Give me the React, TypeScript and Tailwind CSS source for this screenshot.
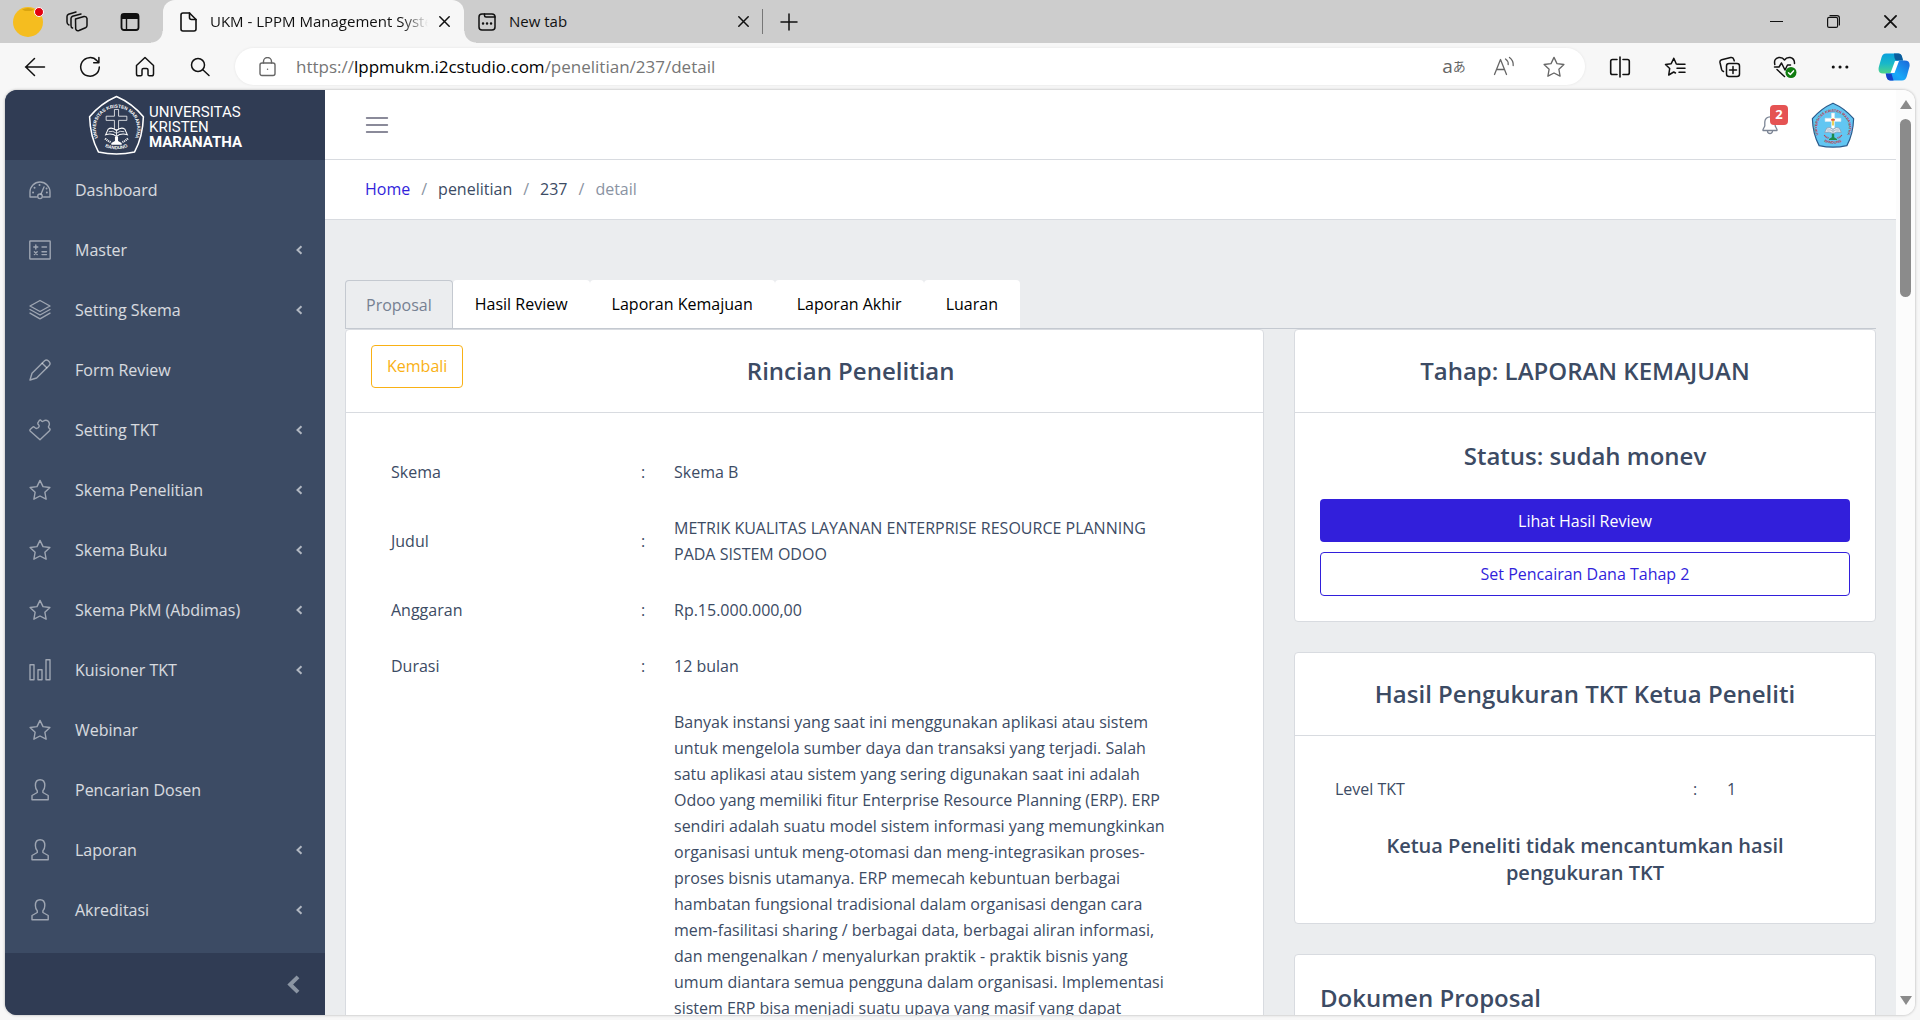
import type { ReactNode } from "react";

type IconProps = { className?: string; children: ReactNode; box?: string; sw?: number };

function Icon({ className = "size-[22px]", children, box = "0 0 22 22", sw = 1.4 }: IconProps) {
  return (
    <svg
      viewBox={box}
      className={className}
      fill="none"
      stroke="currentColor"
      strokeWidth={sw}
      strokeLinecap="round"
      strokeLinejoin="round"
      aria-hidden="true"
    >
      {children}
    </svg>
  );
}

/* ---------- sidebar icons ---------- */

const speedometer = (
  <>
    <path d="M7.5 18H1V13a10 10 0 0 1 20 0v5h-6.500" />
    <circle cx="11" cy="17.300" r="2.300" />
    <path d="M12 15 15 8" />
    <path d="M4 13.500h.1M5.500 8.800h.1M10.500 6h.1M17.800 13.500h.1M17.500 9.500h.1" strokeWidth="1.900" />
  </>
);
const calculator = (
  <>
    <rect x="0.800" y="2" width="20.400" height="18" rx="0.500" />
    <path d="M4.800 8h4M6.800 6v4M13 8h4.500M13 12.800h4.500M13 15.600h4.500M5.400 12.800l2.800 2.800M8.200 12.800l-2.800 2.800" />
  </>
);
const layers = (
  <>
    <path d="M11 1.500 21 7 11 12.500 1 7Z" />
    <path d="M1 10.500 11 16l10-5.500M1 14.200 11 19.800l10-5.600" />
  </>
);
const pencil = (
  <>
    <path d="M1 21 3 14.200 15.600 1.800a2.600 2.600 0 0 1 3.600 0l1 1a2.600 2.600 0 0 1 0 3.600L7.600 19Z" />
    <path d="m13.200 4.200 4.600 4.600" />
  </>
);
const puzzle = (
  <path d="M11 20.700 1.400 12.200q-1-1 0-2l2.200-2q1-.8 2 .2 1.600 1.800 3.600.4 1.800-1.600.2-3.200-.9-.8-.4-2L10.300 1.500q1-1 1.800.2.9 1.300 2.400.3 2.500-1.600 4.800.3 2 2.500.3 5-.5 1 .5 1.800 1.800 1.200.4 2.600Z" />
);
const star = (
  <path d="m11 1.400 3 6.200 6.900.9-5 4.800 1.200 6.900L11 17l-6.100 3.200 1.200-6.900-5-4.800 6.900-.9Z" />
);
const bars = <path d="M1 5.700h4v15H1zM9 10.700h4v10H9zM17 .8h4v19.900h-4z" />;
const user = (
  <path d="M3 20.800v-4.300l5.300-3v-1.700C6.900 10.600 6.400 9 6.400 6.500c0-4 2-5.700 4.700-5.700s4.700 1.700 4.700 5.700c0 2.500-.5 4.100-1.900 5.300v1.700l5.300 3v4.300Z" />
);

const navItems: { label: string; icon: ReactNode; sub?: boolean }[] = [
  { label: "Dashboard", icon: speedometer },
  { label: "Master", icon: calculator, sub: true },
  { label: "Setting Skema", icon: layers, sub: true },
  { label: "Form Review", icon: pencil },
  { label: "Setting TKT", icon: puzzle, sub: true },
  { label: "Skema Penelitian", icon: star, sub: true },
  { label: "Skema Buku", icon: star, sub: true },
  { label: "Skema PkM (Abdimas)", icon: star, sub: true },
  { label: "Kuisioner TKT", icon: bars, sub: true },
  { label: "Webinar", icon: star },
  { label: "Pencarian Dosen", icon: user },
  { label: "Laporan", icon: user, sub: true },
  { label: "Akreditasi", icon: user, sub: true },
];

/* ---------- university emblem ---------- */

function Emblem({ className, color }: { className: string; color: boolean }) {
  const line = color ? "#2c5b8c" : "#ffffff";
  const ink = color ? "#c2323a" : "#ffffff";
  const id = color ? "ring-color" : "ring-mono";
  return (
    <svg viewBox="0 0 110 116" className={className} aria-hidden="true">
      <path
        d="M55 3 Q85 16 107 42 Q106 80 90 110 Q55 118 20 110 Q4 80 3 42 Q25 16 55 3Z"
        fill={color ? "#62c6f2" : "none"}
        stroke={line}
        strokeWidth="3"
        strokeLinejoin="round"
      />
      <path id={id} d="M24 90 A40 40 0 1 1 86 90" fill="none" />
      <path id={id + "-low"} d="M22 94 Q55 116 88 94" fill="none" />
      <text fill={ink} fontSize="9" fontWeight="700" fontFamily="Liberation Sans, sans-serif">
        <textPath href={"#" + id} startOffset="50%" textAnchor="middle">
          UNIVERSITAS KRISTEN MARANATHA
        </textPath>
      </text>
      <text fill={ink} fontSize="9" fontWeight="700" fontFamily="Liberation Sans, sans-serif">
        <textPath href={"#" + id + "-low"} startOffset="50%" textAnchor="middle">
          BANDUNG
        </textPath>
      </text>
      <path
        d="M51 28h8v13h16v8H59v18h-8V49H35v-8h16Z"
        fill={color ? "#ffffff" : "#303c54"}
        stroke={color ? "#d7e7f0" : "#ffffff"}
        strokeWidth="1.500"
      />
      {color && <path d="M55 41v18" stroke="#e8c52e" strokeWidth="4" />}
      {color && <path d="M50 45h10" stroke="#d33" strokeWidth="3" />}
      <path
        d="M55 69 Q46 61 39 66L34 77q12-4 21 3 9-7 21-3l-5-11Q64 61 55 69Z"
        fill={color ? "#dfe6ee" : "#303c54"}
        stroke={color ? "#8c9fb5" : "#ffffff"}
        strokeWidth="2"
      />
      <path d="M40 71q8-3 15 3 7-6 15-3M55 69v10" fill="none" stroke={color ? "#8c9fb5" : "#ffffff"} strokeWidth="1.500" />
      <path d="M52 80h6v9l7 4v3H45v-3l7-4Z" fill={color ? "#1d8a4a" : "#ffffff"} />
      <path d="M33 84q5 5 11 7M77 84q-5 5-11 7" stroke={ink} strokeWidth="4" strokeDasharray="2 1.500" fill="none" />
    </svg>
  );
}

/* ---------- browser chrome ---------- */

function CloseX({ className = "size-[11px]" }: { className?: string }) {
  return (
    <Icon className={className} box="0 0 11 11" sw={1.5}>
      <path d="m.8.8 9.400 9.400M10.200.8.800 10.200" />
    </Icon>
  );
}

function TabStrip() {
  return (
    <div className="flex h-[43px] shrink-0 bg-[#cdcdcd] text-[#111]">
      <div className="flex w-[163px] shrink-0 items-center pl-[13px]">
        <button aria-label="Profile" className="relative size-[30px] rounded-full bg-[#f5bd1f]">
          <svg viewBox="0 0 30 30" className="size-[30px]" aria-hidden="true">
            <path d="M9 2.500q6-3 12 0l-3 1.500h-6Z" fill="#d9a40f" />
          </svg>
          <span className="absolute top-0 -right-px size-[10px] rounded-full border border-white bg-[#e3000f]" />
        </button>
        <button aria-label="Workspaces" className="ml-[23px]">
          <Icon sw={1.5}>
            <path d="m9.500 8 8.500-2.500q2.500-.4 3 2v7q0 1.500-1.500 2.200L13 19.500q-2.500.8-3.300-1.500Z" />
            <path d="M6.500 17Q5 16.500 5 14.500v-7Q5 6 6.500 5.300L15 3M3 14q-2-.8-2-3V5.500Q1 4 2.500 3.300L10 1" />
          </Icon>
        </button>
        <button aria-label="Tab actions" className="ml-8">
          <Icon className="size-[20px]" box="0 0 20 20" sw={1.8}>
            <rect x="1.500" y="2" width="17" height="16" rx="2.500" />
            <path d="M2 3.500h16v2.500H2z" fill="currentColor" />
            <path d="M6.500 6.500V18" strokeWidth="1.400" />
          </Icon>
        </button>
      </div>

      <div className="relative flex w-[301px] shrink-0 items-center rounded-t-xl bg-[#f7f7f7] pr-[14px] pl-[17px]">
        <span className="absolute bottom-0 -left-3 size-3 bg-[radial-gradient(circle_at_0_0,transparent_11px,#f7f7f7_12px)]" />
        <span className="absolute -right-3 bottom-0 size-3 bg-[radial-gradient(circle_at_100%_0,transparent_11px,#f7f7f7_12px)]" />
        <Icon className="h-[20px] w-[17px] shrink-0" box="0 0 17 20" sw={1.6}>
          <path d="M3 1h6.500L16 7.500V17q0 2-2 2H3q-2 0-2-2V3q0-2 2-2Z" />
          <path d="M9.500 1v4.500q0 2 2 2H16" />
        </Icon>
        <span className="ml-[13px] flex-1 overflow-hidden text-[15px] whitespace-nowrap [mask-image:linear-gradient(to_right,black_88%,transparent)]">
          UKM - LPPM Management System
        </span>
        <button aria-label="Close tab" className="ml-[11px]">
          <CloseX />
        </button>
      </div>

      <div className="flex w-[298px] shrink-0 items-center pr-[13px] pl-[14px]">
        <Icon className="size-[18px] shrink-0" box="0 0 18 18" sw={1.5}>
          <rect x="1" y="1" width="16" height="16" rx="3" />
          <path d="M6.500 1v1.500q0 1.500 1.500 1.500h9" />
          <path d="M5 10.500h.1M9 10.500h.1M13 10.500h.1" strokeWidth="2.400" />
        </Icon>
        <span className="ml-[13px] flex-1 text-[15px]">New tab</span>
        <button aria-label="Close tab">
          <CloseX />
        </button>
      </div>
      <div className="my-auto h-[25px] w-px bg-[#777]" />
      <button aria-label="New tab" className="ml-[17px]">
        <Icon className="size-[18px]" box="0 0 18 18" sw={1.5}>
          <path d="M9 1v16M1 9h16" />
        </Icon>
      </button>
      <div className="ml-auto flex items-center gap-11 pr-[23px]">
        <button aria-label="Minimize">
          <Icon className="size-[13px]" box="0 0 13 13" sw={1.2}>
            <path d="M.5 6.500h12" />
          </Icon>
        </button>
        <button aria-label="Restore">
          <Icon className="size-[13px]" box="0 0 13 13" sw={1.2}>
            <rect x="0.600" y="2.400" width="10" height="10" rx="1.500" />
            <path d="M3 .6h7q2.400 0 2.400 2.400v7" />
          </Icon>
        </button>
        <button aria-label="Close window">
          <CloseX className="size-[13px]" />
        </button>
      </div>
    </div>
  );
}

function Tool({ label, children, className = "w-[55px]" }: { label: string; children: ReactNode; className?: string }) {
  return (
    <button aria-label={label} className={`flex h-9 shrink-0 items-center justify-center ${className}`}>
      {children}
    </button>
  );
}

function Toolbar() {
  return (
    <div className="flex h-[47px] shrink-0 items-center bg-[#f7f7f7] pl-[7px] text-[#111]">
      <Tool label="Back">
        <Icon sw={1.5}>
          <path d="M20.500 11h-19M10.500 2.500 1.800 11l8.700 8.500" />
        </Icon>
      </Tool>
      <Tool label="Refresh">
        <Icon sw={1.5}>
          <path d="M20.300 11A9.300 9.300 0 1 1 18 4.800L19.800 6.500M19.900 1.500v5.200h-5.200" />
        </Icon>
      </Tool>
      <Tool label="Home">
        <Icon sw={1.5}>
          <path d="M2.500 9.500 11 1.500l8.500 8V18q0 1.800-1.800 1.800h-2.400q-1.300 0-1.300-1.300V14q0-1.500-1.500-1.500h-3Q8 12.500 8 14v4.500q0 1.300-1.300 1.300H4.300q-1.800 0-1.800-1.800Z" />
        </Icon>
      </Tool>
      <Tool label="Search">
        <Icon sw={1.5}>
          <circle cx="9" cy="9" r="6.500" />
          <path d="m13.800 13.800 6.200 5.700" />
        </Icon>
      </Tool>
      <div className="mr-[7px] ml-2 flex h-[37px] flex-1 items-center rounded-full bg-white pr-[6px] pl-[24px] shadow-[0_0_3px_rgba(0,0,0,0.08)]">
        <Icon className="h-[20px] w-[17px] text-[#666]" box="0 0 17 20" sw={1.4}>
          <rect x="1" y="6" width="15" height="12.500" rx="2" />
          <path d="M4.500 6V4.500a4 4 0 0 1 8 0V6M8.500 12.200h.1" />
        </Icon>
        <div className="ml-[20px] flex-1 text-[17px] text-[#767676]">
          https://<span className="text-black">lppmukm.i2cstudio.com</span>/penelitian/237/detail
        </div>
        <div className="flex text-[#666]">
          <Tool label="Translate" className="w-[50px] font-['Open_Sans','Noto_Sans_CJK_JP',sans-serif]">
            <span className="text-[19px] leading-none">a</span>
            <span className="text-[13px] leading-none">あ</span>
          </Tool>
          <Tool label="Read aloud" className="w-[50px]">
            <Icon sw={1.3}>
              <path d="m1.500 18.500 6-15 6 15M3.500 13.500h8M12.500 3q3 2 2.700 5.500M16.500 1.500q4 3 3.700 8" />
            </Icon>
          </Tool>
          <Tool label="Add to favorites" className="w-[50px]">
            <Icon sw={1.3}>{star}</Icon>
          </Tool>
        </div>
      </div>
      <Tool label="Split screen">
        <Icon sw={1.6}>
          <path d="M8 3.500H3.500q-1.800 0-1.800 1.800v11.400q0 1.800 1.800 1.800H8M14 3.500h4.500q1.800 0 1.800 1.800v11.400q0 1.800-1.800 1.800H14M11 1v20" />
        </Icon>
      </Tool>
      <Tool label="Favorites">
        <Icon sw={1.5}>
          <path d="M14 8.300 12.300 8 9.800 2.300 7.200 7.700 1.500 8.500l4.200 4-1 6.500 5-3 1.800 1" />
          <path d="M14.500 8.200h6.500M13 12.200h8M15 16.200h6" />
        </Icon>
      </Tool>
      <Tool label="Collections">
        <Icon sw={1.5}>
          <rect x="7.500" y="7.500" width="13" height="13" rx="2.500" />
          <path d="M14 10.500v7M10.500 14h7M4.500 15.500Q3 15 2.600 13.500L1 6.500Q.6 4.300 2.700 3.700l9-2.200q2.300-.4 3 1.700l.5 1.600" />
        </Icon>
      </Tool>
      <Tool label="Browser essentials">
        <svg
          viewBox="0 0 24 24"
          className="size-[24px]"
          fill="none"
          stroke="currentColor"
          strokeWidth="1.500"
          strokeLinejoin="round"
          strokeLinecap="round"
          aria-hidden="true"
        >
          <path d="M1.800 9.500q-1.300-6 4-7Q9.500 2 11.500 5q2-3 5.700-2.500 4.500 1 4.300 6M1.500 12h4.500l2.500-4 3.500 7 2.500-5h3M4 14.500l7.500 7" />
          <circle cx="18" cy="17.500" r="5.500" fill="#107c10" stroke="none" />
          <path d="m15.500 17.700 1.800 1.800 3.200-3.600" stroke="#fff" />
        </svg>
      </Tool>
      <Tool label="Settings and more">
        <Icon sw={3}>
          <path d="M4.200 11h.1M11 11h.1M17.800 11h.1" />
        </Icon>
      </Tool>
      <Tool label="Copilot" className="w-[53px]">
        <svg viewBox="0 0 32 28" className="h-[28px] w-[32px]" aria-hidden="true">
          <defs>
            <linearGradient id="cp-a" x1="0" y1="0" x2="0" y2="1">
              <stop offset="0" stopColor="#0aa0dc" />
              <stop offset="0.500" stopColor="#19b8c9" />
              <stop offset="1" stopColor="#4fd48a" />
            </linearGradient>
            <linearGradient id="cp-b" x1="1" y1="0" x2="0" y2="1">
              <stop offset="0" stopColor="#1c66d8" />
              <stop offset="0.600" stopColor="#18a8f8" />
              <stop offset="1" stopColor="#1a8cf0" />
            </linearGradient>
          </defs>
          <path d="M8 .5h12q3 0 4 3.500l1 3.500h-5l-7 13H5q-5.500 0-4.200-6.500L3.500 4.500Q4.500.5 8 .5Z" fill="url(#cp-a)" />
          <path d="M16 .5h4.500q2.700 0 3.500 3l1 4h-5.500Q17 7.500 16.500 5Z" fill="#0b5c9c" />
          <path d="M24 27.500H12.500q-3 0-3.800-3l-1-4H13l5-13h8.500q6 0 5 6l-2.600 9.500q-1.200 4.500-4.900 4.500Z" fill="url(#cp-b)" />
          <path d="M7.700 20.500h5.800l2 7h-3q-3 0-3.800-3Z" fill="#1440c8" />
          <path d="M17 8h4l-4.500 12h-4Z" fill="#ffffff" />
        </svg>
      </Tool>
    </div>
  );
}

/* ---------- application ---------- */

function Sidebar() {
  return (
    <aside className="flex w-[320px] shrink-0 flex-col bg-[#3c4b64]">
      <div className="flex h-[70px] shrink-0 items-center justify-center gap-1 bg-[#303c54] text-white">
        <Emblem className="h-[60px] w-[57px]" color={false} />
        <div className="pt-1 font-[Roboto,sans-serif] text-[15px] leading-[15px]">
          UNIVERSITAS
          <br />
          KRISTEN
          <br />
          <b>MARANATHA</b>
        </div>
      </div>
      <nav className="min-h-0 flex-1 overflow-hidden">
        {navItems.map((n) => (
          <a key={n.label} href="#" className="flex h-[60px] items-center pr-[22px] pl-6 text-white/80">
            <Icon className="size-[22px] shrink-0 text-white/50">{n.icon}</Icon>
            <span className="ml-6 flex-1">{n.label}</span>
            {n.sub && (
              <Icon className="h-[10px] w-[7px] text-white/60" box="0 0 7 10" sw={2}>
                <path d="M5.500 1.200 1.500 5l4 3.800" strokeLinecap="butt" strokeLinejoin="miter" />
              </Icon>
            )}
          </a>
        ))}
      </nav>
      <button
        aria-label="Collapse sidebar"
        className="flex h-[62px] shrink-0 items-center justify-end bg-[#303c54] pr-[25px] text-[#8b95a3]"
      >
        <Icon className="h-[19px] w-[13px]" box="0 0 13 19" sw={4}>
          <path d="M11 1.800 3.200 9.500 11 17.200" strokeLinecap="butt" strokeLinejoin="miter" />
        </Icon>
      </button>
    </aside>
  );
}

function Header() {
  return (
    <header className="flex h-[70px] shrink-0 items-center justify-between border-b border-[#d8dbe0] bg-white pr-[41px] pl-10">
      <button aria-label="Toggle menu" className="text-[#8a8a99]">
        <Icon className="h-[18px] w-[24px]" box="0 0 24 18" sw={2}>
          <path d="M1.800 2h20.400M1.800 9h20.400M1.800 16h20.400" />
        </Icon>
      </button>
      <div className="flex items-center gap-[33px]">
        <button aria-label="Notifications" className="relative text-[#7b8494]">
          <Icon className="h-[20px] w-[16px]" box="0 0 16 20" sw={1.3}>
            <path d="M1 15.500v-1l1.800-3.500V7a5.200 5.200 0 0 1 10.400 0v4l1.800 3.500v1ZM5.500 16a2.500 2.500 0 0 0 5 0" />
          </Icon>
          <span className="absolute -top-[10px] left-2 flex h-[20px] w-[18px] items-center justify-center rounded bg-[#e55353] text-[13px] font-bold text-white">
            2
          </span>
        </button>
        <button aria-label="Account">
          <Emblem className="h-[46px] w-[44px]" color />
        </button>
      </div>
    </header>
  );
}

function Breadcrumb() {
  return (
    <nav
      aria-label="Breadcrumb"
      className="flex h-[60px] shrink-0 items-center gap-[11px] border-b border-[#d8dbe0] bg-white pb-[2px] pl-10 text-[#8a93a2]"
    >
      <a href="#" className="text-[#321fdb]">Home</a>
      <span>/</span>
      <a href="#" className="text-[#3c4b64]">penelitian</a>
      <span>/</span>
      <a href="#" className="text-[#3c4b64]">237</a>
      <span>/</span>
      <span>detail</span>
    </nav>
  );
}

const tabs = ["Hasil Review", "Laporan Kemajuan", "Laporan Akhir", "Luaran"];

const abstractText =
  "Banyak instansi yang saat ini menggunakan aplikasi atau sistem untuk mengelola sumber daya dan transaksi yang terjadi. Salah satu aplikasi atau sistem yang sering digunakan saat ini adalah Odoo yang memiliki fitur Enterprise Resource Planning (ERP). ERP sendiri adalah suatu model sistem informasi yang memungkinkan organisasi untuk meng-otomasi dan meng-integrasikan proses-proses bisnis utamanya. ERP memecah kebuntuan berbagai hambatan fungsional tradisional dalam organisasi dengan cara mem-fasilitasi sharing / berbagai data, berbagai aliran informasi, dan mengenalkan / menyalurkan praktik - praktik bisnis yang umum diantara semua pengguna dalam organisasi. Implementasi sistem ERP bisa menjadi suatu upaya yang masif yang dapat";

const details: [string, string][] = [
  ["Skema", "Skema B"],
  ["Judul", "METRIK KUALITAS LAYANAN ENTERPRISE RESOURCE PLANNING PADA SISTEM ODOO"],
  ["Anggaran", "Rp.15.000.000,00"],
  ["Durasi", "12 bulan"],
  ["", abstractText],
];

function Card({ children }: { children: ReactNode }) {
  return <section className="rounded border border-[#d8dbe0] bg-white">{children}</section>;
}

function CardHead({ title, action }: { title: string; action?: ReactNode }) {
  return (
    <div className="flex h-[83px] items-center border-b border-[#d8dbe0] px-[25px]">
      {action}
      <h2 className="flex-1 text-center text-[24px] font-semibold">{title}</h2>
    </div>
  );
}

function Detail() {
  return (
    <main className="min-h-0 flex-1 overflow-hidden bg-[#ebedef] px-5 pt-[60px]">
      <div role="tablist" className="flex border-b border-[#c4c9d0] text-black">
        <button
          role="tab"
          aria-selected="true"
          className="h-[48px] rounded-t border border-b-0 border-[#c4c9d0] px-5 text-[#768192]"
        >
          Proposal
        </button>
        {tabs.map((t) => (
          <button key={t} role="tab" aria-selected="false" className="h-[48px] rounded-t bg-white px-[22px]">
            {t}
          </button>
        ))}
      </div>
      <div className="grid grid-cols-[30fr_19fr] items-start gap-[30px]">
        <Card>
          <CardHead
            title="Rincian Penelitian"
            action={
              <button className="mb-[10px] h-[43px] rounded border border-[#f9b115] px-[15px] text-[#f9b115]">
                Kembali
              </button>
            }
          />
          <table className="mt-[31px] ml-[45px] w-[783px] table-fixed leading-[26px]">
            <tbody>
              {details.map(([k, v], i) => (
                <tr key={i}>
                  <th scope="row" className="w-[250px] py-[15px] text-left font-normal">{k}</th>
                  <td className="w-[33px] py-[15px]">{k && ":"}</td>
                  <td className="py-[15px]">{v}</td>
                </tr>
              ))}
            </tbody>
          </table>
        </Card>
        <div className="flex flex-col gap-[30px]">
          <Card>
            <CardHead title="Tahap: LAPORAN KEMAJUAN" />
            <div className="flex flex-col p-[25px]">
              <h2 className="mb-[26px] text-center text-[24px] leading-[35px] font-semibold">Status: sudah monev</h2>
              <button className="h-[43px] rounded bg-[#321fdb] text-white">Lihat Hasil Review</button>
              <button className="mt-[10px] h-[44px] rounded border border-[#321fdb] text-[#321fdb]">
                Set Pencairan Dana Tahap 2
              </button>
            </div>
          </Card>
          <Card>
            <CardHead title="Hasil Pengukuran TKT Ketua Peneliti" />
            <div className="px-10 pt-[40px] pb-[37px]">
              <table className="w-full table-fixed leading-[26px]">
                <tbody>
                  <tr>
                    <th scope="row" className="w-[358px] text-left font-normal">Level TKT</th>
                    <td className="w-[34px]">:</td>
                    <td>1</td>
                  </tr>
                </tbody>
              </table>
              <h3 className="mt-[30px] text-center text-[20px] leading-[27px] font-semibold">
                Ketua Peneliti tidak mencantumkan hasil
                <br />
                pengukuran TKT
              </h3>
            </div>
          </Card>
          <Card>
            <h2 className="p-[25px] text-[24px] leading-[35px] font-semibold">Dokumen Proposal</h2>
          </Card>
        </div>
      </div>
    </main>
  );
}

function Scrollbar() {
  return (
    <div className="flex w-[19px] shrink-0 flex-col items-center bg-[#fcfcfc] py-[10px] text-[#8b8b8b]">
      <svg viewBox="0 0 12 9" className="h-[9px] w-[12px]" aria-hidden="true">
        <path d="M6 0 12 9H0Z" fill="currentColor" />
      </svg>
      <div className="mt-[10px] h-[178px] w-[11px] rounded-full bg-[#8b8b8b]" />
      <svg viewBox="0 0 12 9" className="mt-auto h-[9px] w-[12px]" aria-hidden="true">
        <path d="M6 9 12 0H0Z" fill="currentColor" />
      </svg>
    </div>
  );
}

export default function App() {
  return (
    <div className="flex h-screen flex-col overflow-hidden bg-[#f7f7f7] font-['Open_Sans','Noto_Sans',sans-serif] text-[16px]">
      <TabStrip />
      <Toolbar />
      <div className="mx-[5px] mb-[5px] flex min-h-0 flex-1 overflow-hidden rounded-xl text-[#3c4b64] shadow-[0_0_3px_rgba(0,0,0,0.3)]">
        <Sidebar />
        <div className="flex min-w-0 flex-1 flex-col">
          <Header />
          <Breadcrumb />
          <Detail />
        </div>
        <Scrollbar />
      </div>
    </div>
  );
}
